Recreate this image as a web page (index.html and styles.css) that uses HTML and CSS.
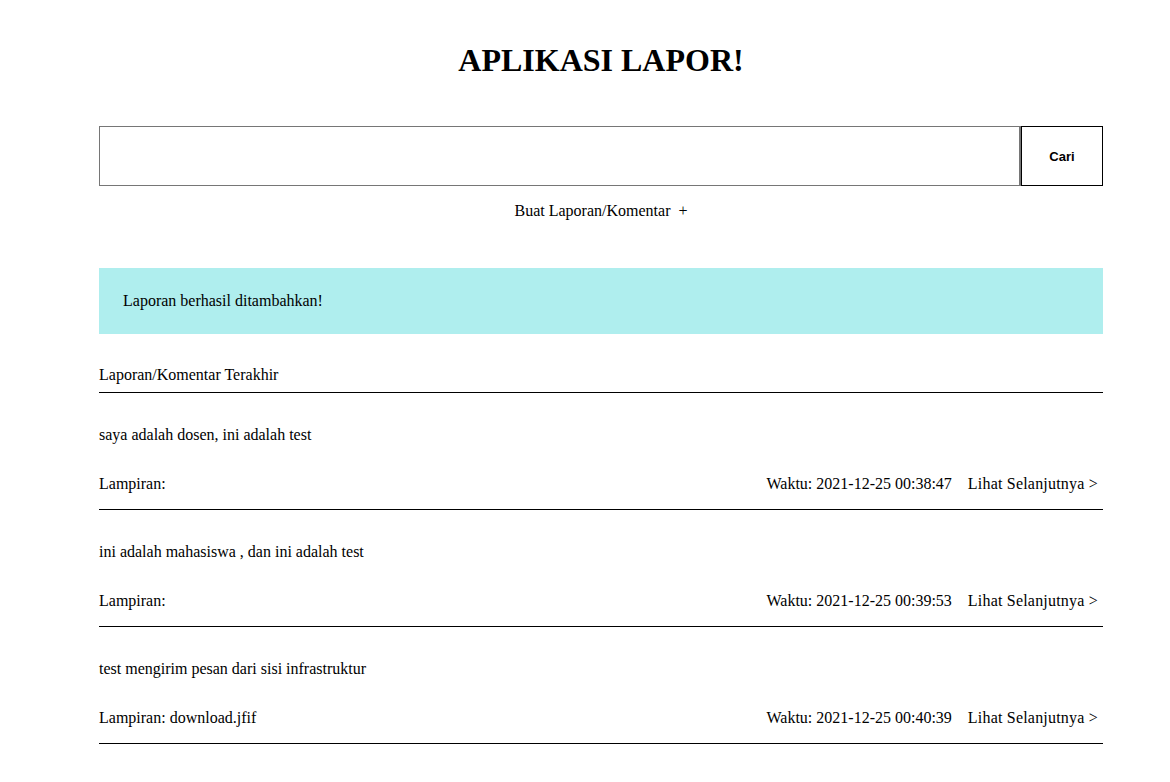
FILE: index.html
```html
<!DOCTYPE html>
<html>
<head>
<meta charset="utf-8">
<title>Aplikasi Lapor</title>
<link rel="stylesheet" href="styles.css">
</head>
<body>
<div class="page">
  <h1 class="title">APLIKASI LAPOR!</h1>
  <form class="search">
    <input class="search-input" type="text">
    <button class="search-btn" type="button">Cari</button>
  </form>
  <div class="create"><a href="#">Buat Laporan/Komentar&nbsp; +</a></div>
  <div class="alert">Laporan berhasil ditambahkan!</div>
  <div class="section-head">Laporan/Komentar Terakhir</div>
  <div class="item">
    <div class="item-text">saya adalah dosen, ini adalah test</div>
    <div class="item-meta">
      <span>Lampiran:</span>
      <span class="meta-right"><span>Waktu: 2021-12-25 00:38:47</span><a class="more" href="#">Lihat Selanjutnya &gt;</a></span>
    </div>
  </div>
  <div class="item">
    <div class="item-text">ini adalah mahasiswa , dan ini adalah test</div>
    <div class="item-meta">
      <span>Lampiran:</span>
      <span class="meta-right"><span>Waktu: 2021-12-25 00:39:53</span><a class="more" href="#">Lihat Selanjutnya &gt;</a></span>
    </div>
  </div>
  <div class="item">
    <div class="item-text">test mengirim pesan dari sisi infrastruktur</div>
    <div class="item-meta">
      <span>Lampiran: download.jfif</span>
      <span class="meta-right"><span>Waktu: 2021-12-25 00:40:39</span><a class="more" href="#">Lihat Selanjutnya &gt;</a></span>
    </div>
  </div>
</div>
</body>
</html>
```

FILE: styles.css
```css
html, body {
  margin: 0;
  padding: 0;
  background: #fff;
}
body {
  font-family: "Liberation Serif", "Times New Roman", serif;
  font-size: 16px;
  color: #000;
}
a {
  color: #000;
  text-decoration: none;
}
.page {
  width: 1004px;
  margin-left: 99px;
  padding-top: 40px;
}
.title {
  margin: 0;
  text-align: center;
  font-size: 32px;
  line-height: 40px;
  font-weight: bold;
}
.search {
  display: flex;
  margin-top: 46px;
  height: 60px;
}
.search-input {
  flex: 1;
  margin: 0;
  border: 1px solid #767676;
  border-right: 2px solid #767676;
  padding: 0;
  box-sizing: border-box;
  height: 60px;
}
.search-btn {
  width: 82px;
  height: 60px;
  margin: 0;
  box-sizing: border-box;
  border: 1px solid #000;
  background: #fff;
  font-family: "Liberation Sans", Arial, sans-serif;
  font-size: 13px;
  font-weight: 600;
  color: #000;
}
.create {
  text-align: center;
  margin-top: 15px;
  line-height: 20px;
}
.alert {
  margin-top: 47px;
  background: #afeeee;
  height: 66px;
  box-sizing: border-box;
  padding: 23px 24px;
  line-height: 20px;
}
.section-head {
  margin-top: 31px;
  line-height: 20px;
  padding-bottom: 7px;
  border-bottom: 1px solid #000;
}
.item {
  border-bottom: 1px solid #000;
  padding-top: 32px;
  padding-bottom: 15px;
}
.item-text {
  line-height: 20px;
}
.item-meta {
  margin-top: 29px;
  line-height: 20px;
  display: flex;
  justify-content: space-between;
}
.meta-right {
  display: flex;
  gap: 16px;
  padding-right: 5px;
}
.more {
  letter-spacing: 0.2px;
}
```
